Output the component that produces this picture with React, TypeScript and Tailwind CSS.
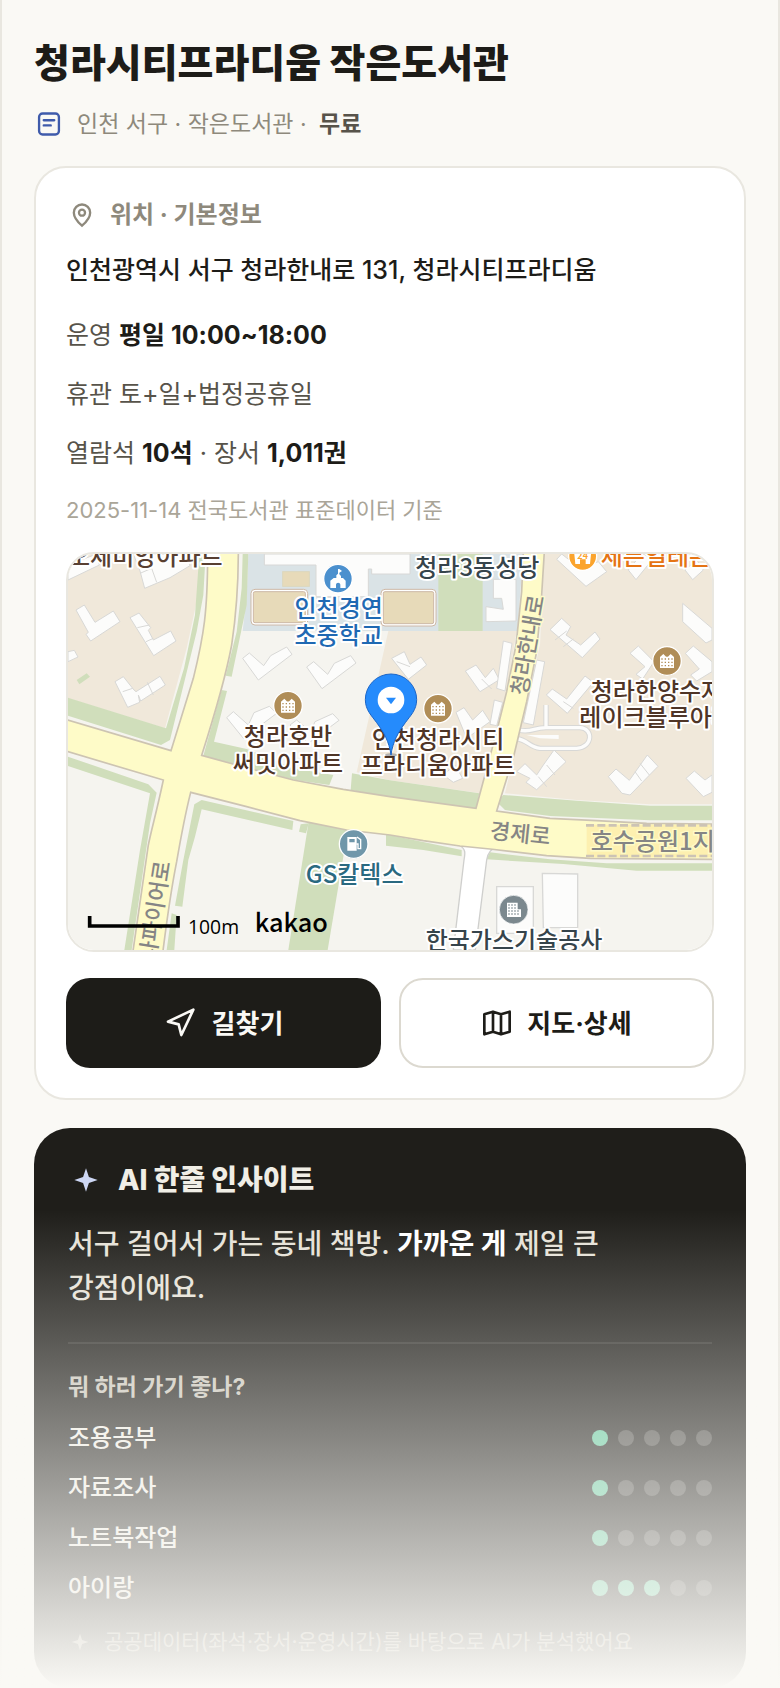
import React from "react";

const sans = "font-['Inter','Noto_Sans_CJK_KR',sans-serif]";

const activities = [
  { name: "조용공부", score: 1 },
  { name: "자료조사", score: 1 },
  { name: "노트북작업", score: 1 },
  { name: "아이랑", score: 3 },
];

function Sparkle({ className }: { className: string }) {
  return (
    <svg viewBox="0 0 24 24" className={className} fill="currentColor" aria-hidden="true">
      <path d="M12 2l2.500 7.500L22 12l-7.500 2.500L12 22l-2.500-7.500L2 12l7.500-2.500z" />
    </svg>
  );
}

function ApartmentMarker({ x, y }: { x: number; y: number }) {
  return (
    <g transform={`translate(${x} ${y})`}>
      <circle r="43" fill="#b08d57" stroke="#fff" strokeWidth="4" />
      <path d="M-21 21V-12l10-9 9 9 2-2 2 2 9-9 10 9v33z" fill="#fff" />
      <path d="M-17-6h34M-17 4h34M-17 14h34" stroke="#b08d57" strokeWidth="4" strokeDasharray="4 6" />
    </g>
  );
}

function Label({ x, y, color, anchor = "middle", children }: { x: number; y: number; color: string; anchor?: "middle" | "start"; children: string }) {
  return (
    <text x={x} y={y} fill={color} fontSize="72" textAnchor={anchor} stroke="#fff" strokeWidth="12" strokeLinejoin="round" paintOrder="stroke">
      {children}
    </text>
  );
}

function LocationMap() {
  return (
    <svg viewBox="24 27 1932 1188" className="block w-full font-['Noto_Sans_CJK_KR',sans-serif] font-medium" role="img" aria-label="청라시티프라디움 작은도서관 지도">
      <rect x="24" y="27" width="1932" height="1188" fill="#f5f4ef" />

      <g fill="#f0e8da">
        <path d="M24 27H424L410 170 380 310 315 550 24 460z" />
        <path d="M985 258H1370L1340 440 1262 745 990 706 890 682z" />
        <path d="M1453 27H1956V778L1770 778 1550 765 1335 745 1400 470 1440 300z" />
      </g>
      <path d="M565 27H1390L1372 258H548L560 150z" fill="#dae3e6" />
      <g fill="#d0debb">
        <path d="M418 27H437L430 150 410 260 330 585 303 600 24 512V458L318 550 372 370 405 210z" />
        <path d="M548 27H565L560 180 515 395 497 392 530 260 545 130z" />
        <path d="M485 435L501 438 462 590 560 612 700 670 820 690 808 720 700 704 430 632z" />
        <path d="M876 685L990 706 1258 745 1248 790 990 755 872 735z" />
        <path d="M1135 27H1268V258H1135z" />
        <path d="M1330 750L1550 767 1770 782H1956V826H1770L1470 813 1335 795 1310 770z" />
        <path d="M24 635L265 718 290 743 270 835 215 1215H193L240 915 270 745 24 663z" />
        <path d="M425 765L700 828 697 855 425 793 405 875 385 945 367 1085 345 1082 370 945 403 778z" />
        <path d="M335 1105L350 1110 343 1215H320zM722 838L746 835 738 865 717 860z" />
        <path d="M746 830L860 855 850 935 803 1215H685z" />
        <path d="M978 868L1205 915V934L1090 915 978 902zM1290 922L1470 943 1640 955H1956V977H1730L1510 957 1280 943z" />
        <path d="M50 405L80 385 90 395 58 418z" />
      </g>

      <g fill="#e7dab9" stroke="#cdb8a6" strokeWidth="3">
        <rect x="573" y="133" width="170" height="107" rx="12" fill="#fff" />
        <rect x="580" y="140" width="156" height="93" rx="5" />
        <rect x="963" y="133" width="165" height="110" rx="12" fill="#fff" />
        <rect x="970" y="140" width="151" height="96" rx="5" />
        <rect x="668" y="80" width="80" height="44" stroke="#dcd7bd" />
      </g>

      <g fill="#fcfcfb" stroke="#d8d8d6" strokeWidth="3">
        <path d="M613 27H1050V87H935V72H925V155H768V60H613z" />
        <path d="M24 60L110 27 118 60 24 105zM220 27L240 78 254 130 330 98 390 62 380 27z" />
        <path d="M48 195L73 180 105 232 160 198 180 230 92 288 78 268 85 262z" />
        <path d="M210 218L237 204 272 248 265 256 280 285 332 258 348 288 281 332z" />
        <path d="M165 410L190 395 222 435 228 440 300 394 316 420 242 468 235 450 239 472 203 487z" />
        <path d="M24 320L43 316 54 336 24 350z" />
        <path d="M548 340L568 324 611 362 632 332 680 306 696 328 595 405z" />
        <path d="M740 366L761 350 803 388 823 355 872 332 888 354 786 431z" />
        <path d="M500 518L520 500 565 540 582 503 628 484 650 505 550 580z" />
        <path d="M690 540L710 525 752 560 765 530 818 506 837 526 745 595z" />
        <path d="M995 340L1033 320 1050 358 1083 336 1100 360 1045 403z" />
        <path d="M1216 378L1248 360 1276 398 1300 370 1318 404 1260 440z" />
        <path d="M1188 502L1212 488 1238 525 1268 496 1290 530 1220 580z" />
        <path d="M1300 103H1368V228L1278 230V185L1330 193 1325 160H1300z" />
        <path d="M1330 288L1356 295 1335 438 1310 430zM1430 345L1454 350 1420 540 1390 533z" />
        <path d="M1303 465L1328 472 1310 542 1290 538z" />
        <path d="M1470 254L1505 220 1532 245 1518 270 1562 300 1605 261 1620 282 1567 338z" />
        <path d="M1459 450L1477 432 1520 462 1575 393 1600 412 1522 505z" />
        <path d="M1490 43L1505 27 1560 70 1615 50 1640 80 1578 124zM1705 75L1745 27 1780 40 1728 104zM1875 75L1910 45 1930 75 1898 104z" />
        <path d="M1868 175L1956 250V285L1938 294 1868 230z" />
        <path d="M1710 325L1735 303 1782 350 1748 402 1728 388 1755 365zM1876 325L1900 303 1956 350V380L1910 408 1892 390 1918 372z" />
        <path d="M1370 680L1395 656 1430 690 1450 660 1482 615 1518 650 1430 734 1398 712 1410 700z" />
        <path d="M1645 695L1668 672 1708 706 1762 630 1794 664 1710 750 1686 745z" />
        <path d="M1878 700L1903 678 1935 705 1956 690V742L1930 755z" />
        <path d="M1150 690L1185 660 1208 700 1180 712z" />
      </g>
      <g stroke="#d8d8d6" strokeWidth="3">
        <path d="M240 85L275 70M275 70L290 112M232 248L268 240M258 290L280 280M188 440L218 430M262 412L280 450M1010 350L1050 365M1265 402L1295 432M1485 285L1520 258M1510 305L1540 282M1435 695L1460 725M1460 660L1485 690M1725 680L1745 708M1740 655L1768 690M1510 470L1540 490" />
      </g>

      <path d="M1374 555C1420 565 1420 545 1465 548H1560C1600 550 1600 607 1550 610H1440C1410 607 1400 585 1375 582M1458 550V480" fill="none" stroke="#d8d8d6" strokeWidth="16" />
      <path d="M1374 555C1420 565 1420 545 1465 548H1560C1600 550 1600 607 1550 610H1440C1410 607 1400 585 1375 582M1458 550V480" fill="none" stroke="#fcfcfb" strokeWidth="10" />
      <path d="M1400 570H1496V582L1440 580" fill="#fcfcfb" />

      <path d="M1196 900C1218 910 1216 925 1212 945L1180 1215H1246L1280 945C1284 920 1295 912 1310 905z" fill="#fff" stroke="#cfcfcd" strokeWidth="4" />

      <g fill="#fefbc8" stroke="#cdc4b2" strokeWidth="5">
        <path d="M1390 20L1385 140 1368 300 1340 440 1310 560 1248 790 990 755 850 733 700 705 530 660 425 631C470 490 500 380 515 300 530 200 535 130 535 20H443C443 200 432 270 400 400L333 617 10 521V616L310 705C290 800 275 850 265 900L218 1225H308C325 1090 340 1000 350 950 362 880 375 810 392 742L560 785 720 827 860 855 990 870 1090 887 1200 903 1290 912 1460 932 1590 940 1966 943V837L1760 835 1610 827 1470 820 1310 798 1362 630 1400 470 1430 320 1445 150 1453 20z" />
      </g>
      <rect x="1580" y="839" width="386" height="98" fill="#fdf0b0" />
      <path d="M1578 841H1966M1578 933H1966" stroke="#ccc3b5" strokeWidth="8" strokeDasharray="24 10" />
      <g fill="#fcfcfb" stroke="#d8d8d6" strokeWidth="4">
        <path d="M1310 1025H1420V1165H1310zM1447 985L1553 987V1148H1450z" />
      </g>

      <Label x={24} y={60} color="#583f31" anchor="start">오세비앙아파트</Label>
      <Label x={1252} y={92} color="#36444b">청라3동성당</Label>
      <Label x={1622} y={60} color="#e57414" anchor="start">세븐일레븐</Label>
      <circle cx="1568" cy="34" r="42" fill="#fba42d" stroke="#fff" strokeWidth="4" />
      <path d="M1542 18H1594L1590 57H1577V43H1560V57H1546z" fill="#fff" />
      <text x="1568" y="43" fontSize="27" textAnchor="middle" fill="#fba42d" fontWeight="700">24</text>

      <circle cx="834" cy="101" r="43" fill="#4b90ce" stroke="#fff" strokeWidth="4" />
      <path d="M811 129V107L821 99 829 99V91L834 86V72H838L846 78 838 83V88L843 93V99L849 99 857 107V129H841V119C841 111 828 111 828 119V129z" fill="#fff" />
      <Label x={836} y={216} color="#1f69b3">인천경연</Label>
      <Label x={836} y={296} color="#1f69b3">초중학교</Label>

      <ApartmentMarker x={684} y={482} />
      <Label x={684} y={600} color="#4f3527">청라호반</Label>
      <Label x={684} y={680} color="#4f3527">써밋아파트</Label>
      <ApartmentMarker x={1134} y={491} />
      <Label x={1134} y={610} color="#4f3527">인천청라시티</Label>
      <Label x={1134} y={688} color="#4f3527">프라디움아파트</Label>
      <ApartmentMarker x={1821} y={348} />
      <Label x={1592} y={464} color="#4f3527" anchor="start">청라한양수자인</Label>
      <Label x={1558} y={544} color="#4f3527" anchor="start">레이크블루아파트</Label>

      <g fill="#858585" fontSize="66" stroke="#fefbc8" strokeWidth="8" paintOrder="stroke">
        <text transform="translate(1400 454) rotate(-80)">청라한내로</text>
        <text transform="translate(284 1252) rotate(-81)">사파이어로</text>
        <text transform="translate(1288 880) rotate(6)">경제로</text>
        <text x="1592" y="914" fontSize="72">호수공원1지하차도</text>
      </g>

      <circle cx="881" cy="897" r="43" fill="#7097aa" stroke="#fff" strokeWidth="4" />
      <path d="M862 876H890V917H862zM868 882V892H884V882z" fill="#fff" fillRule="evenodd" />
      <path d="M891 876L902 884V911H894V897H889" fill="none" stroke="#fff" strokeWidth="4" />
      <Label x={884} y={1015} color="#2a6980">GS칼텍스</Label>

      <circle cx="1361" cy="1094" r="43" fill="#7b888e" stroke="#fff" strokeWidth="2" />
      <path d="M1341 1073H1373V1093H1383V1116H1341z" fill="#fff" />
      <path d="M1345 1080H1370M1345 1089H1370M1345 1098H1380M1345 1107H1380" stroke="#7b888e" strokeWidth="4" strokeDasharray="4 5" />
      <Label x={1362} y={1212} color="#36444b">한국가스기술공사</Label>

      <path d="M89 1113V1143H354V1113" fill="none" stroke="#000" strokeWidth="11" />
      <text x="384" y="1166" fontSize="58" className="font-['Open_Sans',sans-serif]" fontWeight="400" stroke="#f5f4ef" strokeWidth="6" paintOrder="stroke">100m</text>
      <text x="584" y="1160" fontSize="76" className="font-['Noto_Sans_CJK_KR',sans-serif]">kakao</text>

      <ellipse cx="993" cy="630" rx="18" ry="5" fill="#000" opacity="0.3" />
      <path d="M993 630C988 590 970 560 950 533 935 512 916 495 916 464A77 77 0 0 1 1070 464C1070 495 1051 512 1036 533 1016 560 998 590 993 630z" fill="#258bfc" stroke="#1c66c8" strokeWidth="3" />
      <circle cx="993" cy="465" r="40" fill="#fff" />
      <path d="M978 458H1008L993 478z" fill="#258bfc" />
    </svg>
  );
}

export default function App() {
  return (
    <main className={`relative min-h-screen border-x-2 border-[#e9e7e0] bg-[#faf9f5] px-8 pt-8 text-[#1d1c18] ${sans}`}>
      <header>
        <h1 className="text-[39px] leading-[62px] font-extrabold">청라시티프라디움 작은도서관</h1>
        <div className="mt-3 flex h-9 items-center gap-3.5 pl-px text-[23px] text-[#8e897c]">
          <svg viewBox="0 0 24 24" className="size-7 shrink-0 text-[#3f5bab]" fill="none" stroke="currentColor" strokeWidth="2" strokeLinecap="round" aria-hidden="true">
            <rect x="3.500" y="3" width="17" height="18" rx="3" />
            <path d="M7.500 8.800h9M7.500 13.200h6" />
          </svg>
          <p>인천 서구 · 작은도서관 · <strong className="ml-1.5 font-bold text-[#57534a]">무료</strong></p>
        </div>
      </header>

      <section className="mt-6 rounded-[32px] border-2 border-[#e9e7e0] bg-white p-[30px]">
        <h2 className="flex h-[34px] items-center gap-3.5 pl-0.5 text-2xl font-bold text-[#8e897c]">
          <svg viewBox="0 0 24 24" className="size-7 shrink-0" fill="none" stroke="currentColor" strokeWidth="2" aria-hidden="true">
            <path d="M12 21.200s-7-6.200-7-11.200a7 7 0 0 1 14 0c0 5-7 11.200-7 11.200z" />
            <circle cx="12" cy="10" r="2.600" />
          </svg>
          위치 · 기본정보
        </h2>
        <p className="mt-[18px] text-[25px] leading-10 font-medium">인천광역시 서구 청라한내로 131, 청라시티프라디움</p>
        <div className="mt-[25px] flex flex-col gap-[19px] text-[25px] leading-10 text-[#57534a]">
          <p>운영 <strong className="font-bold text-[#1d1c18]">평일 10:00~18:00</strong></p>
          <p>휴관 토+일+법정공휴일</p>
          <p>열람석 <strong className="font-bold text-[#1d1c18]">10석</strong> · 장서 <strong className="font-bold text-[#1d1c18]">1,011권</strong></p>
        </div>
        <p className="mt-[19px] text-[22px] leading-9 text-[#aaa598]">2025-11-14 전국도서관 표준데이터 기준</p>
        <div className="mt-6 overflow-hidden rounded-[28px] border-2 border-[#e9e7e0]">
          <LocationMap />
        </div>
        <div className="mt-[26px] grid grid-cols-2 gap-[18px] text-[26px] font-bold">
          <button type="button" className="flex h-[90px] items-center justify-center gap-4 rounded-3xl bg-[#1d1c18] text-[#faf9f5]">
            <svg viewBox="0 0 24 24" className="size-8" fill="none" stroke="currentColor" strokeWidth="2" strokeLinejoin="round" aria-hidden="true">
              <path d="M3 11l19-9-9 19-2-8z" />
            </svg>
            길찾기
          </button>
          <button type="button" className="flex h-[90px] items-center justify-center gap-3.5 rounded-3xl border-2 border-[#dcd9d0] bg-white">
            <svg viewBox="0 0 24 24" className="size-8" fill="none" stroke="currentColor" strokeWidth="2" strokeLinejoin="round" aria-hidden="true">
              <path d="M9 3.500L2.500 5.500v15l6.500-2 6 2 6.500-2v-15l-6.500 2zM9 3.500v15M15 5.500v15" />
            </svg>
            지도·상세
          </button>
        </div>
      </section>

      <section className="mt-7 rounded-[36px] bg-[#1f1e1a] px-[34px] pt-[30px] pb-7 text-[#f0eee6]">
        <h2 className="flex h-11 items-center gap-[18px] text-[28px] font-extrabold">
          <Sparkle className="ml-1 size-7 text-[#ccd6f3]" />
          AI 한줄 인사이트
        </h2>
        <p className="mt-5 max-w-[560px] text-[28px] leading-[44px] font-medium text-[#e6e2d8]">
          서구 걸어서 가는 동네 책방. <strong className="font-bold text-white">가까운 게</strong> 제일 큰 강점이에요.
        </p>
        <hr className="mt-8 border-t-2 border-[#32312d]" />
        <h3 className="mt-[23px] text-[23px] leading-10 font-bold text-[#c8c4b9]">뭐 하러 가기 좋나?</h3>
        <ul className="mt-1.5">
          {activities.map(({ name, score }) => (
            <li key={name} className="flex h-[50px] items-center justify-between text-2xl font-medium">
              {name}
              <span className="flex gap-2.5" role="img" aria-label={`5점 중 ${score}점`}>
                {[1, 2, 3, 4, 5].map((step) => (
                  <span key={step} className={step <= score ? "size-4 rounded-full bg-[#62c79c]" : "size-4 rounded-full bg-[#4c4b47]"} />
                ))}
              </span>
            </li>
          ))}
        </ul>
        <p className="mt-[11px] flex h-9 items-center gap-3.5 text-[21px] text-[#9c978b]">
          <Sparkle className="ml-0.5 size-5" />
          공공데이터(좌석·장서·운영시간)를 바탕으로 AI가 분석했어요
        </p>
      </section>

      <div className="pointer-events-none absolute -inset-x-0.5 bottom-0 h-[478px] bg-gradient-to-b from-[#faf9f5]/0 to-[#faf9f5]" />
    </main>
  );
}
